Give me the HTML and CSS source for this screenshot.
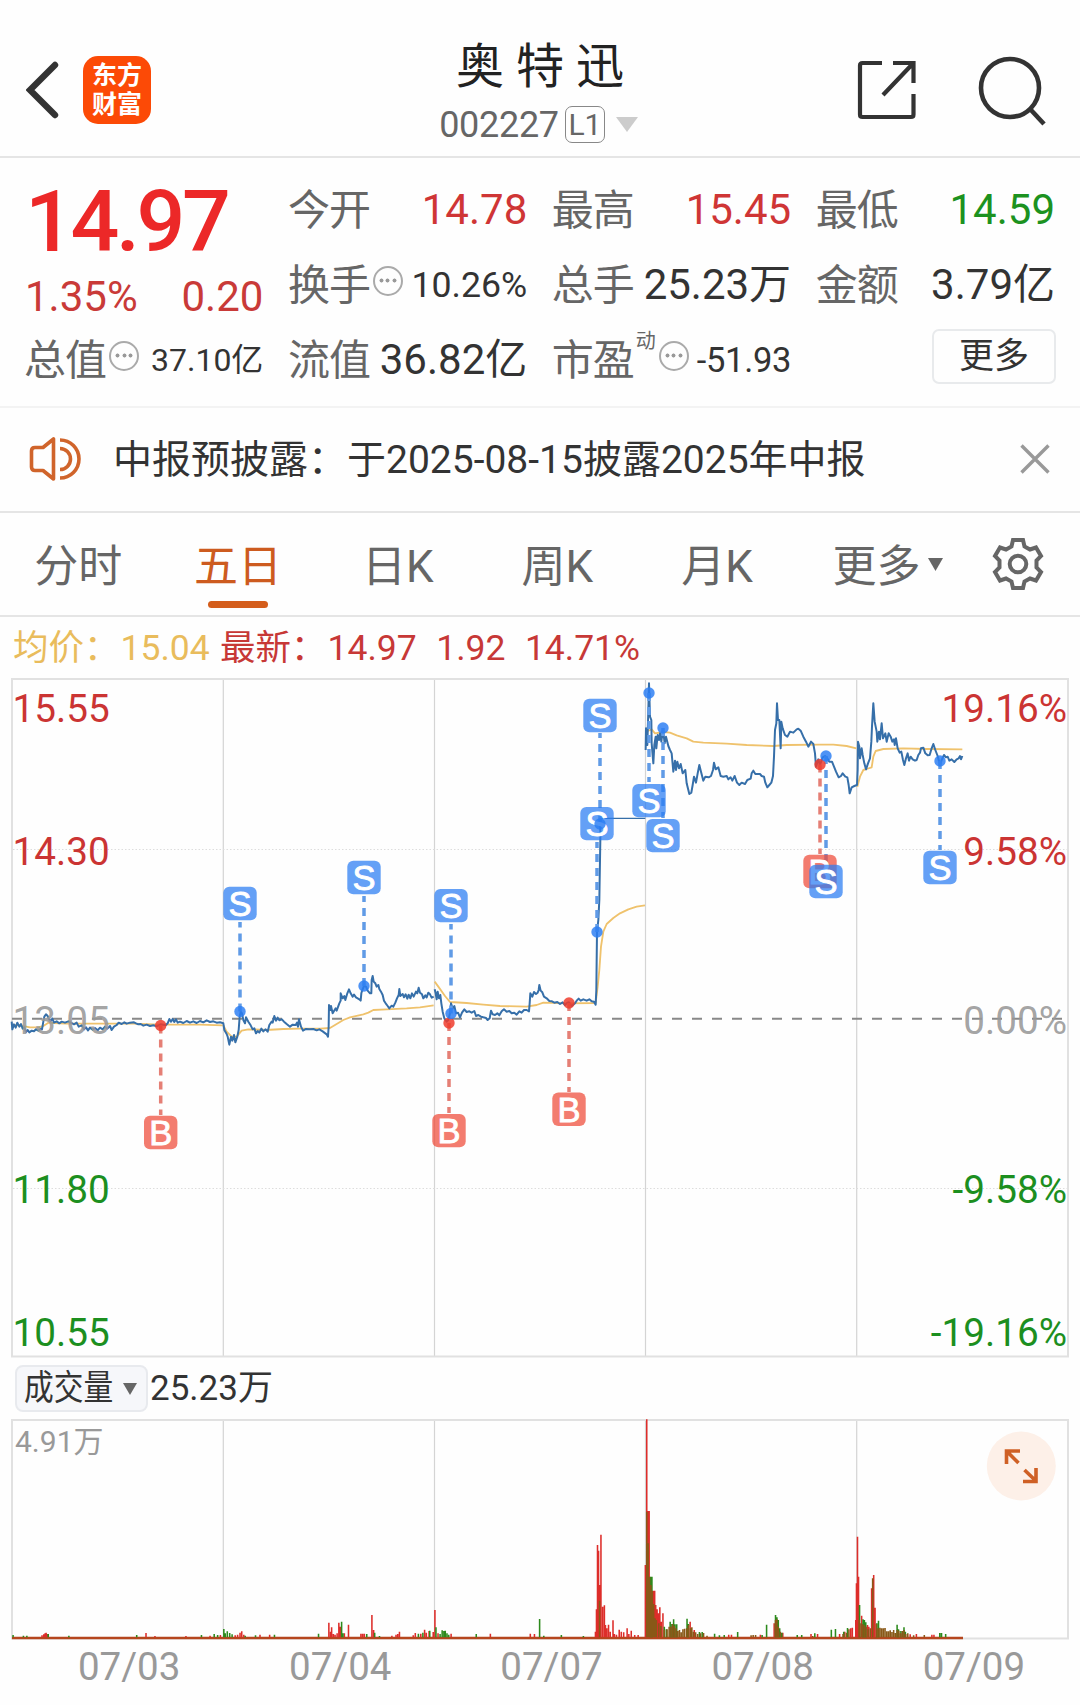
FILE: index.html
```html
<!DOCTYPE html>
<html lang="zh-CN">
<head>
<meta charset="utf-8">
<title>奥特迅 002227</title>
<link rel="stylesheet" href="styles.css">
</head>
<body>
<header class="top">
  <div class="top-left">
    <svg class="back" width="34" height="60" viewBox="0 0 34 60"><path d="M29 5 4 30 29 55" fill="none" stroke="#333" stroke-width="6.400" stroke-linecap="round"/></svg>
    <div class="logo"><span>东方</span><span>财富</span></div>
  </div>
  <div class="top-title">
    <h1>奥 特 迅</h1>
    <div class="code"><span>002227</span><span class="level">L1</span><svg width="22" height="15" viewBox="0 0 22 15"><path d="M0 0H22L11 15z" fill="#ccc"/></svg></div>
  </div>
  <div class="top-right">
    <svg width="60" height="62" viewBox="0 0 60 62" fill="none" stroke="#333" stroke-width="4.2"><path d="M25 4H5.500Q3 4 3 6.500V55.500Q3 58 5.500 58H54Q56.500 58 56.500 55.500V35"/><path d="M36 4H56.500V24M56 4.500 26 36"/></svg>
    <svg width="70" height="72" viewBox="0 0 70 72" fill="none" stroke="#333" stroke-width="4.600"><circle cx="32" cy="34" r="29"/><path d="M53 56 66 70"/></svg>
  </div>
</header>

<section class="quote">
  <div class="main-price">
    <div class="price">14.97</div>
    <div class="change"><span>1.35%</span><span>0.20</span></div>
  </div>
  <div class="cell"><span class="label">今开</span><b class="up">14.78</b></div>
  <div class="cell"><span class="label">最高</span><b class="up">15.45</b></div>
  <div class="cell"><span class="label">最低</span><b class="down">14.59</b></div>
  <div class="cell"><span class="label">换手</span><i class="info"></i><b class="mid">10.26%</b></div>
  <div class="cell"><span class="label">总手</span><b>25.23万</b></div>
  <div class="cell"><span class="label">金额</span><b>3.79亿</b></div>
  <div class="cell"><span class="label">总值</span><i class="info"></i><b class="small">37.10亿</b></div>
  <div class="cell"><span class="label">流值</span><b>36.82亿</b></div>
  <div class="cell"><span class="label">市盈</span><sup>动</sup><i class="info"></i><b class="ratio">-51.93</b></div>
  <div class="cell"><button class="more">更多</button></div>
</section>

<section class="notice">
  <svg width="52" height="46" viewBox="0 0 52 46" fill="none" stroke="#d0642b" stroke-width="3.600"><path d="M24.500 3V43L14 34.500H6Q2.500 34.500 2.500 31V15Q2.500 11.500 6 11.500H14z" stroke-linejoin="round"/><path d="M31 12.500A10.500 10.500 0 0 1 31 33.500M31 4A19 19 0 0 1 31 42"/></svg>
  <p>中报预披露：于2025-08-15披露2025年中报</p>
  <svg class="close" width="30" height="30" viewBox="0 0 30 30"><path d="M1.500 1.500 28.500 28.500M28.500 1.500 1.500 28.500" stroke="#999" stroke-width="3.400"/></svg>
</section>

<nav class="tabs">
  <a>分时</a><a class="active">五日</a><a>日K</a><a>周K</a><a>月K</a>
  <a class="tab-more">更多<svg width="15" height="13" viewBox="0 0 15 13"><path d="M0 0H15L7.500 13z" fill="#666"/></svg></a>
  <svg class="gear" width="52" height="54" viewBox="-26 -27 52 54" fill="none" stroke="#666" stroke-width="4"><path stroke-linejoin="miter" d="M-5-24H5L6.500-17.500 12-14.500 18-16.500 23-8 18.500-3.500V3.500L23 8 18 16.500 12 14.500 6.500 17.500 5 24H-5L-6.500 17.500-12 14.500-18 16.500-23 8-18.500 3.500V-3.500L-23-8-18-16.500-12-14.500-6.500-17.500z"/><circle r="8.300"/></svg>
</nav>

<div class="legend"><span class="avg">均价：<em>15.04</em></span><span class="last">最新：<em>14.97</em></span><span>1.92</span><span>14.71%</span></div>

<svg class="chart" width="1080" height="682" viewBox="0 677 1080 682">
  <defs>
    <g id="s"><rect x="-16.700" y="-16.700" width="33.400" height="33.400" rx="6" fill="#2a7df3" fill-opacity=".73"/><text y="12.300">S</text></g>
    <g id="b"><rect x="-16.700" y="-16.700" width="33.400" height="33.400" rx="6" fill="#ef4c39" fill-opacity=".73"/><text y="12.300">B</text></g>
  </defs>
  <g class="grid">
    <path class="day" d="M223.300 680V1356M434.500 680V1356M645.500 680V1356M856.700 680V1356"/>
    <path class="dots" d="M13 849.500H1067M13 1188.500H1067"/>
    <rect x="12" y="679" width="1056" height="677.500"/>
  </g>
  <path class="zero" d="M12 1018.700H1067"/>
  <g class="average">
    <g transform="translate(0 840) scale(.33333)"><path d="M35 555 60 556 90 562 115 562 130 558 145 548 160 549 200 551 300 551 400 551 480 554 600 554 668 556"/><path d="M670 556 680 575 695 590 710 590 725 572 745 568 800 570 850 567 900 566 960 566 990 564 1010 552 1030 540 1050 532 1090 523 1105 518 1120 510 1160 508 1220 505 1260 502 1301 496"/><path d="M1304 425 1315 440 1335 468 1350 486 1400 489 1450 494 1500 498 1580 500 1610 495 1630 488 1700 490 1787 489 1793 440 1798 390 1803 320 1810 275 1820 252 1840 234 1860 220 1885 208 1910 200 1935 196"/></g>
    <g transform="translate(560 670) scale(.33333)"><path d="M257 185 275 178 285 190 310 186 330 188 350 196 380 205 400 215 430 218 500 221 560 225 640 228 680 225 780 224 820 224 860 228 889 235"/><path d="M892 350 900 320 910 300 920 297 935 292 940 260 947 243 970 237 1030 235 1100 237 1207 238"/></g>
  </g>
  <g class="line">
    <g transform="translate(0 840) scale(.33333)"><path d="M35 545 37 568 42 553 47 563 52 548 58 560 63 552 68 566 73 562 78 576 83 570 88 577 95 572 102 574 108 568 115 572 122 566 126 568 130 545 133 530 138 523 143 528 147 538 152 543 157 536 162 548 170 544 178 550 185 545 195 548 205 544 215 549 222 553 230 548 236 560 245 556 252 568 258 562 264 571 270 563 278 569 285 564 293 571 300 563 308 568 315 560 322 566 330 558 335 570 342 560 350 555 356 548 365 552 373 547 380 551 390 548 402 547 408 550 415 553 422 552 430 557 440 554 450 558 460 556 470 559 482 553 497 556 503 550 508 537 513 545 518 537 523 546 528 538 533 548 540 545 550 549 560 543 570 548 580 544 590 549 600 543 610 547 620 541 630 546 640 544 650 548 660 547 670 550 673 570 680 582 683 590 688 614 693 590 697 602 702 585 706 607 712 590 716 570 719 530 722 515 726 520 730 540 735 550 738 532 745 545 752 556 758 568 763 565 768 580 773 573 778 578 784 566 790 574 797 568 803 575 808 555 815 545 818 548 823 528 828 542 833 533 838 541 845 538 852 545 860 552 870 560 878 554 887 555 891 548 894 560 897 538 903 560 909 572 918 567 928 568 940 567 950 571 958 568 968 574 976 580 980 583 984 590 986 560 987 495 991 510 993 498 998 520 1002 513 1007 505 1010 512 1018 490 1022 482 1022 460 1028 475 1033 468 1036 480 1042 460 1047 448 1052 460 1058 470 1062 464 1068 472 1078 478 1082 482 1084 460 1087 450 1092 438 1098 440 1103 452 1110 460 1114 460 1115 420 1118 408 1121 425 1126 430 1130 440 1135 435 1138 447 1143 455 1148 465 1152 482 1157 490 1163 498 1168 505 1175 497 1180 500 1186 488 1191 475 1196 465 1198 447 1201 468 1208 462 1212 472 1217 463 1222 476 1226 464 1231 475 1236 460 1241 470 1248 455 1252 460 1256 443 1260 458 1266 463 1270 475 1276 466 1280 472 1285 458 1290 463 1295 473 1301 470"/><path d="M1304 448 1307 460 1310 478 1313 455 1317 475 1321 465 1324 490 1328 515 1333 535 1340 545 1345 540 1350 520 1353 490 1358 505 1363 498 1368 520 1374 518 1380 532 1386 518 1393 508 1400 516 1408 514 1415 518 1423 513 1428 528 1435 525 1443 530 1450 532 1458 534 1463 540 1469 535 1473 512 1478 523 1485 525 1492 520 1498 526 1505 514 1512 508 1520 515 1528 513 1535 520 1543 518 1550 524 1558 514 1565 518 1572 510 1580 510 1587 514 1589 490 1591 460 1597 470 1602 456 1608 462 1613 458 1616 450 1618 435 1622 452 1627 457 1632 470 1640 475 1648 483 1656 484 1663 488 1672 486 1680 492 1688 487 1695 495 1702 488 1707 487 1715 498 1725 490 1730 482 1736 476 1742 482 1750 478 1760 482 1768 478 1775 484 1782 485 1787 494 1789 450 1791 277 1795 240 1798 180 1801 0 1801-65"/></g>
    <g transform="translate(560 670) scale(.33333)"><path class="thin" d="M120 445H256"/><path d="M257 240 258 175 262 225 265 120 267 40 270 140 274 150 275 220 280 280 283 225 287 200 289 235 293 195 297 210 300 190 304 215 309 178 314 220 318 200 325 228 330 240 335 250 340 305 345 272 348 300 352 275 357 295 362 282 368 310 376 300 380 340 388 372 394 368 398 345 402 320 408 338 413 310 418 285 423 305 430 332 436 320 446 322 453 318 459 300 462 278 467 298 475 292 482 318 490 320 500 318 505 328 512 322 517 332 524 318 531 338 538 345 545 338 555 342 562 330 572 326 575 310 580 302 586 312 600 312 605 318 612 320 616 338 622 352 628 345 634 338 639 318 642 260 645 180 649 160 651 100 654 150 658 150 662 235 664 155 668 175 675 195 682 200 690 185 700 188 710 178 715 176 722 182 730 200 738 215 745 230 753 215 760 222 765 250 768 290 775 268 780 285 788 262 795 258 800 262 808 275 816 275 822 290 828 305 836 322 843 318 848 310 856 320 862 322 866 345 869 370 875 352 883 348 891 345 893 300 894 215 898 230 900 265 905 235 908 255 913 280 918 298 924 280 930 265 934 215 936 170 940 100 944 155 950 185 952 215 957 185 960 208 965 160 969 205 976 190 980 215 986 190 992 200 997 215 1002 208 1004 225 1008 205 1013 235 1019 248 1024 245 1029 270 1033 285 1038 265 1043 250 1047 272 1052 260 1058 268 1065 272 1070 270 1075 255 1080 248 1083 235 1090 233 1096 250 1103 256 1109 255 1115 235 1120 222 1126 240 1133 258 1140 285 1145 270 1152 255 1158 262 1163 260 1168 272 1175 268 1183 276 1190 268 1196 265 1200 258 1203 268 1207 258"/></g>
  </g>
  <g class="axis">
    <g class="up"><text x="12.500" y="721.500">15.55</text><text x="12.500" y="864.500">14.30</text></g>
    <g class="flat"><text x="12.500" y="1033.500">13.05</text></g>
    <g class="down"><text x="12.500" y="1202.500">11.80</text><text x="12.500" y="1345.500">10.55</text></g>
    <g class="end">
      <g class="up"><text x="1067" y="721.500">19.16%</text><text x="1067" y="864.500">9.58%</text></g>
      <g class="flat"><text x="1067" y="1033.500">0.00%</text></g>
      <g class="down"><text x="1067" y="1202.500">-9.58%</text><text x="1067" y="1345.500">-19.16%</text></g>
    </g>
  </g>
  <g class="stems sell"><path d="M240 1011.500V922M364 986V896M451 1013.500V924M600 822V733M597 932V842M649 693V782M663 728V818M826 756V866M940 761V850"/></g>
  <g class="stems buy"><path d="M160.700 1025.500V1115M449 1023V1113M569 1003V1092M820 764.500V854"/></g>
  <g class="points buy"><circle cx="160.700" cy="1025.500" r="5.700"/><circle cx="449" cy="1023" r="5.700"/><circle cx="569" cy="1003" r="5.700"/><circle cx="820" cy="764.500" r="5.700"/></g>
  <g class="points sell"><circle cx="240" cy="1011.500" r="5.700"/><circle cx="364" cy="986" r="5.700"/><circle cx="451" cy="1013.500" r="5.700"/><circle cx="597" cy="932" r="5.700"/><circle cx="649" cy="693" r="5.700"/><circle cx="663" cy="728" r="5.700"/><circle cx="826" cy="756" r="5.700"/><circle cx="940" cy="761" r="5.700"/></g>
  <g class="tags">
    <use href="#b" x="160.700" y="1132.500"/><use href="#s" x="240" y="903.500"/><use href="#s" x="364" y="877.500"/><use href="#s" x="451" y="905.600"/><use href="#b" x="449" y="1130.600"/><use href="#b" x="569" y="1109.300"/><use href="#s" x="600" y="715.500"/><use href="#s" x="597" y="823.600"/><use href="#s" x="649" y="800.600"/><use href="#s" x="663" y="835.600"/><use href="#b" x="820" y="871.500"/><use href="#s" x="826" y="881.500"/><use href="#s" x="940" y="867.500"/>
  </g>
  <g class="points sell"><circle cx="600" cy="824" r="5.700"/></g>
</svg>

<div class="volume-head"><button class="indicator"><span>成交量</span><svg width="14" height="12" viewBox="0 0 14 12"><path d="M0 0H14L7 12z" fill="#666"/></svg></button><span class="volume-value">25.23万</span></div>

<div class="volume">
  <svg width="1080" height="228" viewBox="0 1417 1080 228">
    <g class="grid"><path class="day" d="M223.300 1420V1638M434.500 1420V1638M645.500 1420V1638M856.700 1420V1638"/><rect x="12" y="1420" width="1056" height="218.500"/></g>
    <text class="vol-max" x="15" y="1451.700">4.91万</text>
    <path d="M12 1638H963" stroke="#b5461d" stroke-width="2.400"/>
    <g class="bars" transform="translate(0 1330) scale(.34436 .33333)">
      <path class="red" d="M122 922V916M127 922V913M131 922V910M134 922V908M138 922V912M424 922V909M450 922V918M540 922V918M610 922V917M640 922V915M683 922V916M690 922V914M697 922V908M702 922V904M708 922V914M755 922V914M783 922V914M955 922V878M960 922V905M963 922V892M968 922V912M973 922V914M979 922V910M984 922V878M988 922V890M1000 922V910M1012 922V884M1048 922V911M1053 922V911M1058 922V911M1080 922V855M1085 922V900M1138 922V917M1150 922V914M1155 922V912M1160 922V905M1200 922V916M1206 922V909M1222 922V911M1233 922V899M1238 922V908M1246 922V903M1258 922V906M1263 922V840M1272 922V910M1310 922V911M1424 922V911M1540 922V911M1552 922V912"/>
      <path class="green" d="M38 922V915M68 922V917M78 922V917M140 922V912M200 922V917M397 922V915M585 922V915M622 922V912M632 922V915M650 922V897M654 922V910M660 922V904M667 922V909M674 922V913M712 922V917M742 922V916M797 922V914M925 922V911M992 922V875M996 922V910M1065 922V912M1088 922V908M1102 922V918M1215 922V911M1228 922V908M1248 922V902M1266 922V892M1278 922V912M1284 922V901M1289 922V903M1293 922V902M1298 922V910M1303 922V914M1383 922V912M1567 922V867"/>
    </g>
    <g class="bars" transform="translate(540 1330) scale(.34436 .33333)">
      <path class="red" d="M161 922V905M164 922V838M167 922V645M170 922V662M173 922V765M177 922V614M182 922V830M187 922V826M190 922V885M194 922V895M199 922V884M204 922V905M212 922V871M216 922V912M222 922V914M230 922V899M236 922V905M243 922V907M253 922V895M258 922V912M265 922V902M275 922V915M285 922V915M306 922V705M310 922V268M313 922V543M317 922V543M330 922V782M333 922V782M336 922V825M340 922V838M344 922V850M348 922V832M352 922V875M357 922V850M436 922V875M448 922V900M548 922V914M556 922V914M640 922V914M680 922V880M705 922V908M787 922V912M806 922V912M870 922V912M885 922V905M902 922V895M907 922V893M917 922V870M919 922V760M922 922V620M925 922V740M934 922V857M951 922V885M955 922V890M963 922V775M969 922V735M973 922V833M1075 922V913M1093 922V912M1138 922V914M1144 922V914"/>
      <path class="green" d="M11 922V917M62 922V915M126 922V918M321 922V740M325 922V740M361 922V890M367 922V898M378 922V875M383 922V882M388 922V868M392 922V883M397 922V883M427 922V866M431 922V882M463 922V906M471 922V906M507 922V911M521 922V916M535 922V915M574 922V906M645 922V915M658 922V884M684 922V855M688 922V862M692 922V870M696 922V895M702 922V908M747 922V915M760 922V915M798 922V910M846 922V899M858 922V897M882 922V905M893 922V894M928 922V825M938 922V868M942 922V870M946 922V877M978 922V880M983 922V872M1037 922V884M1041 922V898M1048 922V903M1057 922V892M1061 922V905M1161 922V909M1166 922V909M1178 922V912"/>
      <path class="both" d="M173 922V812M310 922V545M314 922V640M318 922V740M322 922V765M326 922V782M330 922V822M334 922V865M338 922V870M345 922V880M351 922V888M361 922V900M369 922V898M375 922V890M380 922V890M385 922V882M390 922V888M395 922V895M400 922V903M405 922V900M410 922V907M415 922V898M420 922V896M426 922V895M431 922V885M437 922V895M441 922V892M446 922V905M452 922V907M458 922V912M466 922V910M475 922V909M485 922V917M613 922V916M619 922V915M626 922V915M684 922V870M688 922V868M692 922V890M698 922V905M792 922V918M880 922V912M890 922V908M897 922V898M927 922V870M932 922V880M937 922V882M942 922V886M947 922V890M953 922V898M959 922V895M966 922V745M977 922V882M982 922V895M987 922V893M992 922V895M997 922V895M1002 922V894M1007 922V904M1012 922V904M1017 922V901M1022 922V906M1027 922V900M1032 922V909M1037 922V900M1042 922V902M1047 922V910M1052 922V903M1057 922V900M1062 922V912M1068 922V910M1085 922V916M1116 922V915"/>
    </g>
    <circle cx="1021.300" cy="1466" r="34.500" fill="#fdf0e8"/>
    <path d="M1006.500 1464V1451H1020M1007 1451.500 1018.500 1463M1023 1481.500H1036V1468M1024.500 1470 1036 1481" fill="none" stroke="#cf6025" stroke-width="3.600"/>
  </svg>
</div>
<div class="dates"><span>07/03</span><span>07/04</span><span>07/07</span><span>07/08</span><span>07/09</span></div>
</body>
</html>
```
FILE: styles.css
```css
* { box-sizing: border-box; }
body {
  margin: 0;
  width: 1080px;
  height: 1705px;
  overflow: hidden;
  background: #fefefe;
  color: #333;
  font-family: Roboto, "Noto Sans CJK SC", sans-serif;
}
button { font: inherit; color: inherit; padding: 0; }
svg { display: block; flex: none; }
b, i, em, sup { font-weight: 400; font-style: normal; }

.top {
  height: 158px;
  border-bottom: 2px solid #e5e5e5;
  display: grid;
  grid-template-columns: 300px 1fr 300px;
}
.top-left { display: flex; align-items: flex-start; padding: 56px 0 0 26px; }
.back { margin: 4px 23px 0 0; }
.logo {
  width: 68px;
  height: 68px;
  border-radius: 15px;
  background: #fc4a06;
  color: #fff;
  display: flex;
  flex-direction: column;
  align-items: center;
  justify-content: center;
  font-size: 25px;
  font-weight: 700;
  line-height: 29px;
}
.top-title { display: flex; flex-direction: column; align-items: center; padding-top: 39px; }
h1 { margin: 0; font-size: 48px; font-weight: 400; line-height: 56px; color: #222; white-space: pre; }
.code { display: flex; align-items: center; height: 59px; margin-left: -3px; font-size: 36px; color: #666; letter-spacing: -.3px; }
.level {
  width: 40px;
  height: 37px;
  margin: 0 11px 0 6px;
  border: 1.500px solid #888;
  border-radius: 7px;
  font-size: 30px;
  line-height: 35px;
  text-align: center;
}
.top-right { display: flex; justify-content: flex-end; padding: 54px 32px 0 0; gap: 61px; }
.top-right svg:first-child { margin-top: 5px; }

.quote {
  height: 250px;
  padding: 14px 25px 0;
  border-bottom: 2px solid #f3f3f3;
  display: grid;
  grid-template-columns: repeat(4, 1fr);
  grid-template-rows: repeat(3, 75px);
  column-gap: 25.500px;
}
.main-price { grid-row: span 2; }
.price { height: 99px; line-height: 99px; font-size: 86px; font-weight: 500; color: #ec2828; letter-spacing: -3.400px; white-space: nowrap; }
.change { display: flex; justify-content: space-between; height: 52px; line-height: 52px; font-size: 42px; color: #c93a38; }
.cell { display: flex; align-items: center; font-size: 42px; line-height: 60px; white-space: nowrap; }
.label { color: #666; letter-spacing: -1px; margin: 2px 0 0 -1px; }
.cell b { margin-left: auto; }
.cell .mid { font-size: 35.700px; }
.cell .small { font-size: 32px; }
.cell .ratio { font-size: 34.500px; letter-spacing: -.3px; }
.up { color: #cf3535; fill: #cb3433; }
.down { color: #1c9220; fill: #1c8f1f; }
.info {
  width: 30px;
  height: 30px;
  margin: -8px 0 0 3px;
  border: 2px solid #aaa;
  border-radius: 50%;
  background: radial-gradient(circle, #999 1.700px, transparent 2.300px) center / 7px 7px no-repeat, radial-gradient(circle, #999 1.700px, transparent 2.300px) 3px center / 7px 7px no-repeat, radial-gradient(circle, #999 1.700px, transparent 2.300px) 16px center / 7px 7px no-repeat;
}
sup { font-size: 20px; line-height: 20px; color: #666; align-self: flex-start; margin: 9px 0 0 2px; }
.more { width: 124px; height: 55px; margin: -6px -1px 0 auto; border: 2px solid #e8eaec; border-radius: 7px; background: none; font-size: 35px; line-height: 50px; }

.notice { height: 105px; padding: 0 30px 0 29px; border-bottom: 2px solid #e5e5e5; display: flex; align-items: center; }
.notice svg { margin-top: -2px; }
.notice p { margin: 0 auto 0 32px; font-size: 39px; line-height: 60px; white-space: nowrap; }

.tabs { height: 104px; border-bottom: 2px solid #e5e5e5; display: flex; font-size: 44px; color: #666; }
.tabs a { width: 159.700px; flex: none; display: flex; flex-direction: column; align-items: center; padding-top: 22px; line-height: 64px; }
.tabs a:first-child { margin-left: -1.500px; }
.tabs .active { color: #cd5b1f; }
.tabs .active::after { content: ""; width: 60px; height: 7px; border-radius: 4px; background: #d45d1b; margin-top: 2px; }
.tabs .tab-more { width: 170.500px; flex-direction: row; align-items: flex-start; justify-content: flex-end; gap: 8px; padding-right: 24px; }
.tab-more svg { margin-top: 23px; }
.tabs .gear { margin: 24px 0 0 25px; }

.legend { height: 60px; padding-left: 13px; display: flex; line-height: 63px; font-size: 35.500px; color: #c73836; white-space: nowrap; }
.legend span + span { margin-left: 19.500px; }
.legend .avg { width: 207px; color: #e9bc5c; }
.legend .avg + .last { margin-left: 0; }
.legend em { margin-left: 1px; }

.grid rect { fill: none; stroke: #e1e1e1; stroke-width: 2; }
.day { stroke: #d4d4d4; stroke-width: 1.200; }
.dots { stroke: #ddd; stroke-width: 1.200; stroke-dasharray: 1.500 2; }
.zero { stroke: #888; stroke-width: 2; stroke-dasharray: 10; }
.axis text { font-size: 38.700px; }
.axis .end { text-anchor: end; }
.flat { fill: #999; fill-opacity: .9; }
.average path { fill: none; stroke: #efc26c; stroke-width: 5.500; stroke-linejoin: round; }
.line path { fill: none; stroke: #366fa9; stroke-width: 6; stroke-linejoin: round; }
.line .thin { stroke-width: 4; }
.stems path { fill: none; stroke-width: 3.500; stroke-dasharray: 8 6; }
.stems.sell { stroke: #609be6; }
.stems.buy { stroke: #e57f75; }
.points.sell { fill: #2a7df3; fill-opacity: .83; }
.points.buy { fill: #ee3c2d; fill-opacity: .85; }
defs text { font-family: "Liberation Sans", sans-serif; font-size: 34.500px; fill: #fff; stroke: #fff; stroke-width: .9px; text-anchor: middle; }

.volume-head { height: 60px; padding: 6px 0 0 15px; display: flex; align-items: flex-start; font-size: 35px; line-height: 47px; }
.indicator { width: 133px; height: 47px; border: 2px solid #e8eaee; border-radius: 8px; background: #f6f7fa; display: flex; align-items: center; padding-left: 7px; line-height: 45px; }
.indicator span { width: 99px; white-space: nowrap; transform: scaleX(.85); transform-origin: left; }
.volume-value { margin-left: 2px; }
.volume { height: 228px; margin-top: -2px; }
.vol-max { font-size: 30px; fill: #999; }
.bars path { stroke-width: 4.500; }
.red { stroke: #dd2d2a; }
.green { stroke: #2c8a1c; }
.both { stroke: #895817; }
.dates { padding-left: 23.500px; display: grid; grid-template-columns: repeat(5, 211.200px); text-align: center; font-size: 38.500px; line-height: 44px; color: #999; }
```
